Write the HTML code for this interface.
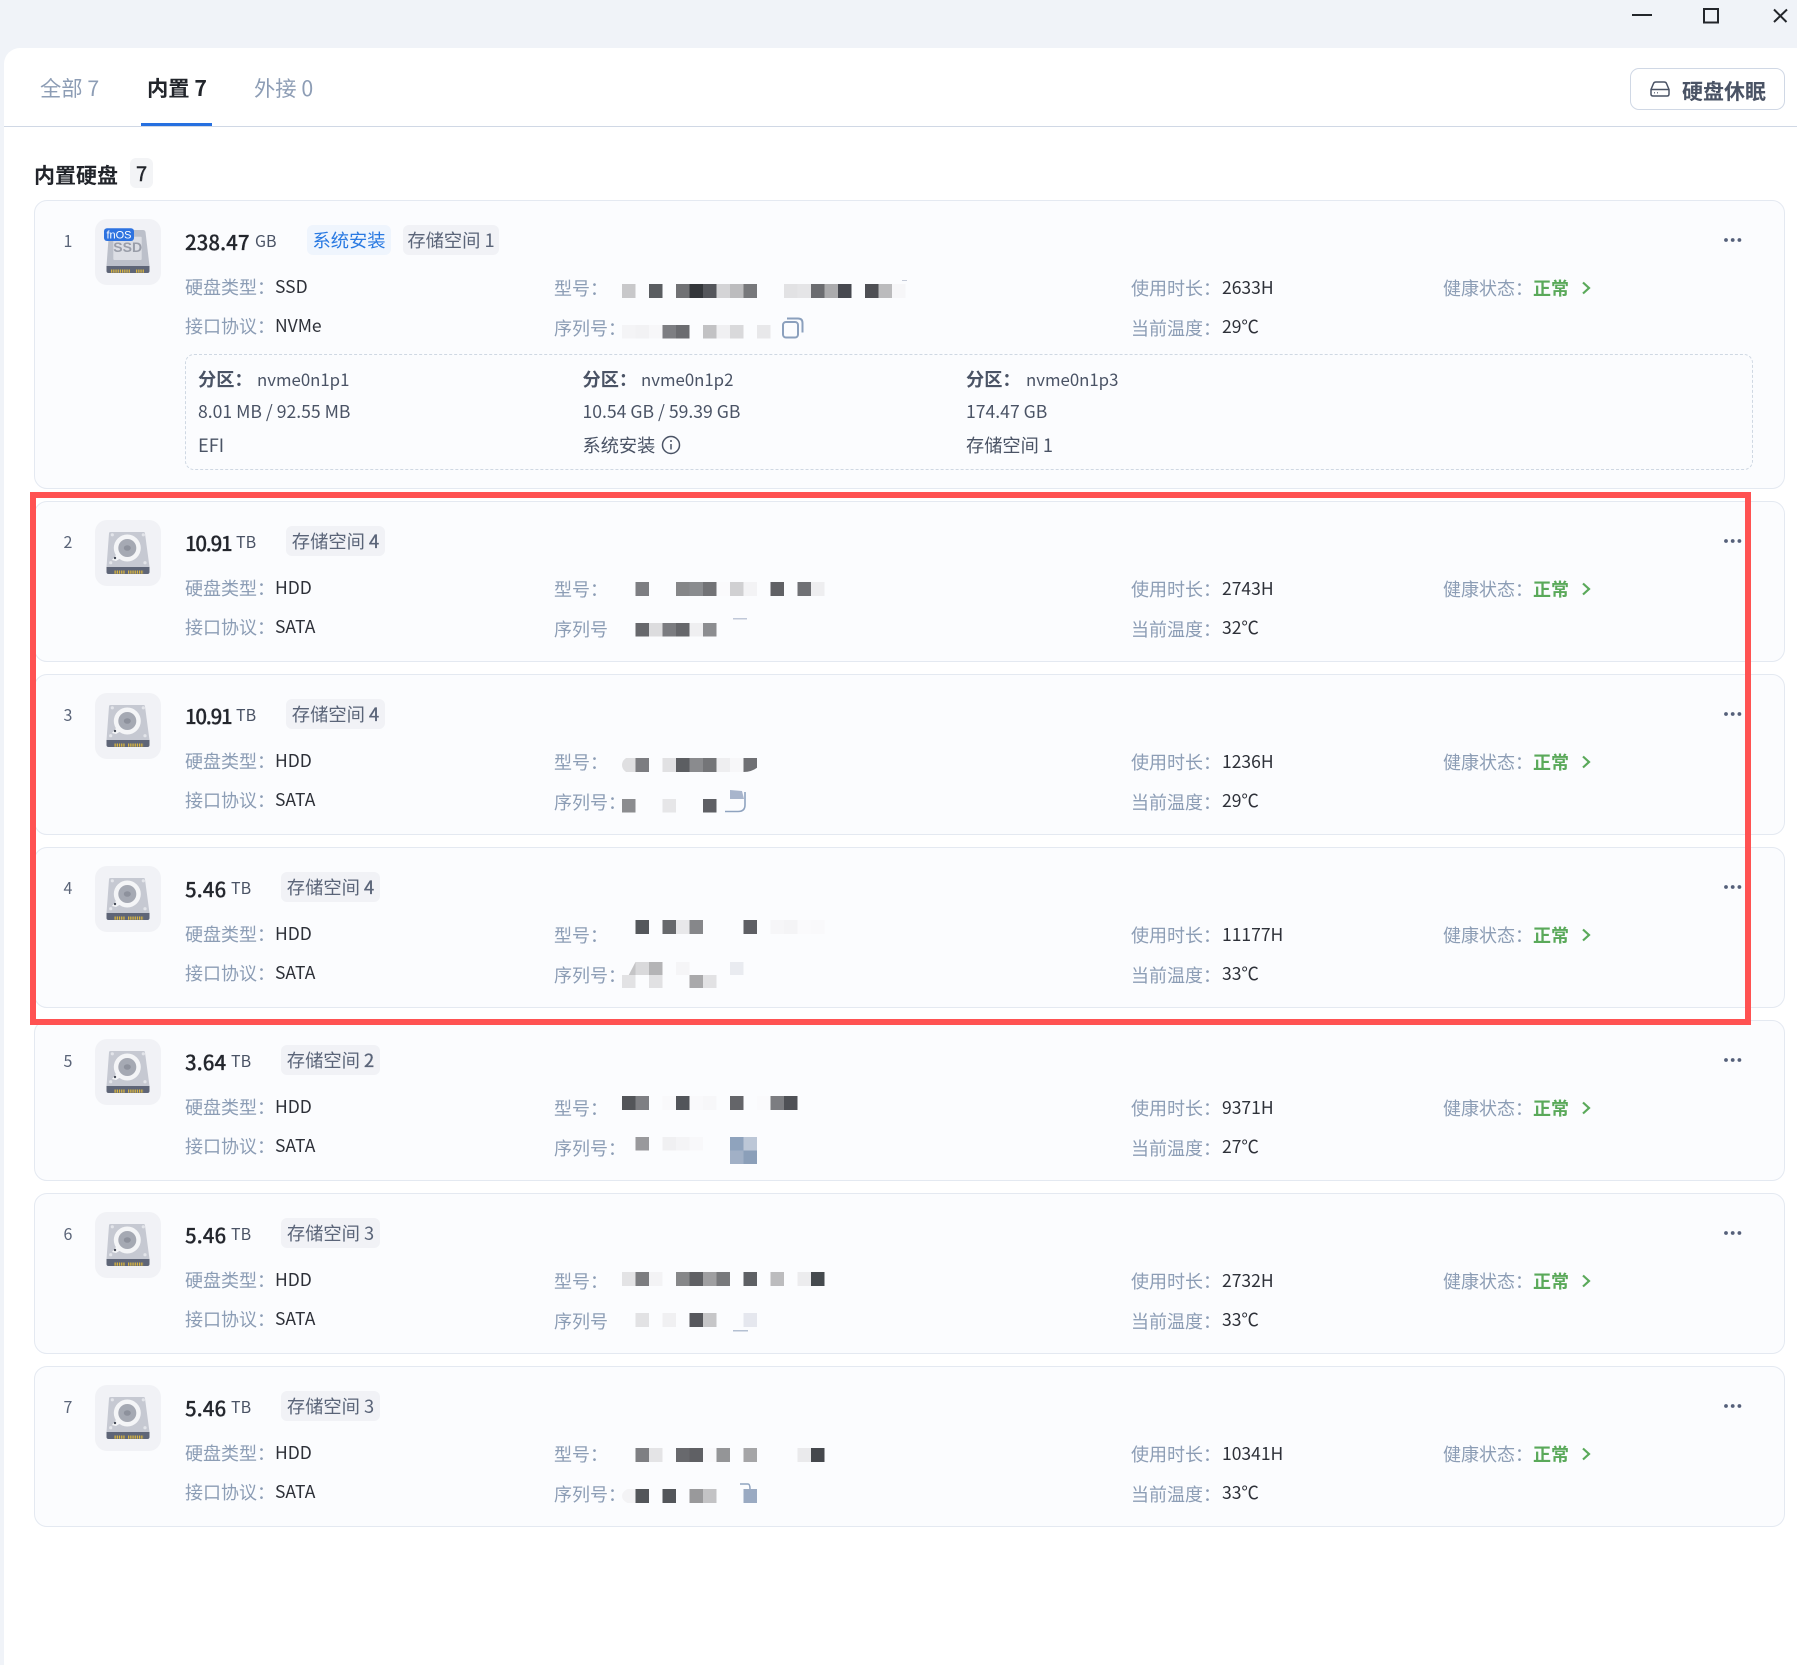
<!DOCTYPE html>
<html lang="zh"><head><meta charset="utf-8"><title>硬盘</title>
<style>
html,body{margin:0;padding:0;width:1797px;height:1665px;overflow:hidden;background:#f0f3f8}
body{position:relative;font-family:"Noto Sans CJK SC","Liberation Sans",sans-serif;font-size:18px}
div,span.a,svg.a{position:absolute}
.t{white-space:nowrap;line-height:26px;height:26px}
#panel{left:4px;top:48px;width:1793px;height:1617px;background:#fff;border-radius:16px 0 0 0}
.c{left:0;width:0;height:0}
.box{left:34px;top:0;width:1751px;height:161px;box-sizing:border-box;background:#fbfcfe;border:1px solid #e4e9f1;border-radius:13px}
.n{left:58px;width:20px;text-align:center;top:27px;color:#5a6478;font-size:16px}
.tile{left:95px;top:19px;width:66px;height:66px;background:#f1f2f6;border-radius:12px}
.sz{left:185px;top:28px;font-size:20.5px;color:#23262d;font-weight:500;-webkit-text-stroke:.2px #23262d}
.nar{letter-spacing:-1.3px}
.u{top:27px;font-size:16px;color:#4a5365}
.tag{top:25px;height:30px;line-height:31px;text-align:center;background:#f1f2f6;color:#5a6478;border-radius:6px;font-size:18.3px;white-space:nowrap}
.s{-webkit-text-stroke:.35px #5a6478}
.l{color:#8c9db5;font-size:18px}
.v{color:#2d3038;font-size:17.5px}
.l1{left:185px;top:74px}.l2{left:185px;top:113px}
.v1{left:275px;top:74px}.v2{left:275px;top:113px}
.m1{left:554px;top:74.500px}.m2{left:554px;top:114.500px}
.r1{left:1131px;top:75px}.r2{left:1131px;top:115px}
.w1{left:1222px;top:75px}.w2{left:1222px;top:114px}
.h{left:1443px;top:75px}
.ok{left:1533px;top:75px;color:#5aa95a;font-weight:700;font-size:18px}
.p{color:#4a5365;font-size:18.2px}
.pn{font-size:16.800px}
.pz{font-size:17.600px}
.b{font-weight:700}
</style></head><body>

<svg class="a" style="left:1625px;top:0" width="172" height="30" fill="none" stroke="#23262b" stroke-width="2">
<path d="M7 15H27"/><rect x="79" y="9" width="14" height="13.5"/><path d="M149 9.5L161.500 22M162 9.500L149 22"/></svg>

<div id="panel"></div>

<div class="t" style="left:40px;top:75px;font-size:21.3px;color:#8d9db5">全部 7</div>
<div class="t b" style="left:147px;top:75px;font-size:21.3px;color:#22252b">内置 7</div>
<div class="t" style="left:254px;top:75px;font-size:21.3px;color:#8d9db5">外接 0</div>
<div style="left:4px;top:126px;width:1793px;height:1px;background:#d0d8e5"></div>
<div style="left:141px;top:123px;width:71px;height:3px;background:#2670e0"></div>

<div style="left:1630px;top:68px;width:155px;height:42px;box-sizing:border-box;border:1px solid #d0d8e5;border-radius:9px;background:#fff"></div>
<svg class="a" style="left:1649px;top:80px" width="22" height="18" fill="none" stroke="#4a5365" stroke-width="1.5">
<path d="M2 9.500L4.500 3.500Q5 2 7 2H15Q17 2 17.500 3.500L20 9.500V14Q20 16 18 16H4Q2 16 2 14Z"/><path d="M2 9.500H20"/><path d="M5 12.800H6M8 12.800H9" stroke-width="1.200"/></svg>
<div class="t b" style="left:1682px;top:78px;font-size:21px;color:#4a5365">硬盘休眠</div>

<div class="t b" style="left:34px;top:162px;font-size:21px;color:#22252b">内置硬盘</div>
<div style="left:130px;top:158px;width:23px;height:30px;background:#f3f4f6;border-radius:6px;text-align:center;line-height:29px;font-size:20px;color:#22252b;-webkit-text-stroke:.4px #22252b">7</div>

<svg width="0" height="0" style="position:absolute">
<symbol id="hdd" viewBox="0 0 66 66">
<path d="M15.500 12H48.500Q50 12 50 13.500L54.500 47H11.500L14 13.500Q14 12 15.500 12Z" fill="#c6c9d2"/>
<path d="M11.500 47H54.500V52Q54.500 54 52.500 54H13.500Q11.500 54 11.500 52Z" fill="#5e6577"/>
<path d="M19.500 52.100H30M33 52.100H48.500" fill="none" stroke="#d8b542" stroke-width="3.200" stroke-dasharray="1.300 .9"/>
<circle cx="32.300" cy="28" r="13.500" fill="#f4f5f7"/>
<path d="M21 35L17 40L21 41L26 38Z" fill="#f4f5f7"/>
<circle cx="32.300" cy="28" r="9" fill="#a5a9b3"/>
<ellipse cx="32.300" cy="28" rx="3.500" ry="2.800" fill="#8d919c"/>
<circle cx="20" cy="38" r="1.200" fill="#444a56"/>
<circle cx="17.300" cy="14.800" r="1.600" fill="#e3e5ea"/><circle cx="48.300" cy="14.800" r="1.600" fill="#e3e5ea"/>
<circle cx="15.700" cy="42.700" r="1.600" fill="#e3e5ea"/><circle cx="50" cy="42.700" r="1.600" fill="#e3e5ea"/>
</symbol>
<symbol id="more" viewBox="0 0 20 6"><circle cx="3" cy="3" r="1.900" fill="#55607a"/><circle cx="9.700" cy="3" r="1.900" fill="#55607a"/><circle cx="16.400" cy="3" r="1.900" fill="#55607a"/></symbol>
<symbol id="chev" viewBox="0 0 10 14"><path d="M2 1.500L8 7L2 12.500" fill="none" stroke="#5aa95a" stroke-width="2.200"/></symbol>
</svg>

<!-- card 1 -->
<div class="c" style="top:200px">
<div class="box" style="height:289px"></div>
<div class="t n">1</div>
<div class="tile"><svg class="a" style="left:0;top:0" width="66" height="66" viewBox="0 0 66 66">
<path d="M16 11H48Q50 11 50.500 13L54.500 47H11.500L14 13Q14.500 11 16 11Z" fill="#bcc0ca"/>
<rect x="18.300" y="17.700" width="28.400" height="23.300" rx="1" fill="#dcdee4"/>
<text x="32.700" y="33" text-anchor="middle" font-family="Liberation Sans,sans-serif" font-weight="700" font-size="14" fill="#9a9ea9">SSD</text>
<path d="M11.500 47H54.500V52Q54.500 54 52.500 54H13.500Q11.500 54 11.500 52Z" fill="#5e6577"/>
<path d="M16 52.100H35M41 52.100H49" fill="none" stroke="#d8b542" stroke-width="3.200" stroke-dasharray="1.300 .9"/>
<rect x="9" y="9.300" width="30" height="12.700" rx="3" fill="#2e73e0"/>
<text x="24" y="19.500" text-anchor="middle" font-family="Liberation Sans,sans-serif" font-size="11" fill="#fff">fnOS</text>
</svg></div>
<div class="t sz">238.47</div><div class="t u" style="left:255px">GB</div>
<div class="tag" style="left:307px;width:84px;background:#eff5fd;color:#2a7ae2">系统安装</div>
<div class="tag" style="left:403px;width:96px">存储空间 1</div>
<svg class="a" style="left:1723px;top:37px" width="20" height="6"><use href="#more"/></svg>
<div class="t l l1">硬盘类型：</div><div class="t v v1">SSD</div>
<div class="t l l2">接口协议：</div><div class="t v v2">NVMe</div>
<div class="t l m1">型号：</div><div class="t l m2">序列号：</div>
<div class="t l r1">使用时长：</div><div class="t v w1">2633H</div>
<div class="t l r2">当前温度：</div><div class="t v w2">29℃</div>
<div class="t l h">健康状态：</div><div class="t ok">正常</div>
<svg class="a" style="left:1581px;top:81px" width="10" height="14"><use href="#chev"/></svg>
<svg class="a" style="left:780px;top:116px" width="25" height="24" fill="none" stroke="#8ba0bd" stroke-width="2"><rect x="3" y="6" width="15" height="15.500" rx="3"/><path d="M7 2.500H18Q22.500 2.500 22.500 7V16.500"/></svg>
<div style="left:185px;top:154px;width:1568px;height:116px;box-sizing:border-box;border:1px dashed #cfd8e3;border-radius:9px"></div>
<div class="t p b" style="left:198px;top:166px">分区：</div><div class="t p pn" style="left:257px;top:166px">nvme0n1p1</div>
<div class="t p pz" style="left:198px;top:199px">8.01 MB / 92.55 MB</div>
<div class="t p" style="left:198px;top:232px">EFI</div>
<div class="t p b" style="left:582.5px;top:166px">分区：</div><div class="t p pn" style="left:641px;top:166px">nvme0n1p2</div>
<div class="t p pz" style="left:582.500px;top:199px">10.54 GB / 59.39 GB</div>
<div class="t p" style="left:582.500px;top:232px">系统安装</div>
<svg class="a" style="left:661px;top:235px" width="20" height="20" fill="none" stroke="#4a5365" stroke-width="1.500"><circle cx="10" cy="10" r="8.500"/><path d="M10 9V14.500"/><circle cx="10" cy="6" r="1" fill="#4a5365" stroke="none"/></svg>
<div class="t p b" style="left:966px;top:166px">分区：</div><div class="t p pn" style="left:1026px;top:166px">nvme0n1p3</div>
<div class="t p pz" style="left:966px;top:199px">174.47 GB</div>
<div class="t p" style="left:966px;top:232px">存储空间 1</div>
</div>

<!-- card 2 -->
<div class="c" style="top:501px">
<div class="box"></div><div class="t n">2</div>
<div class="tile"><svg class="a" style="left:0;top:0" width="66" height="66"><use href="#hdd"/></svg></div>
<div class="t sz nar" style="top:27.500px">10.91</div><div class="t u" style="left:236px">TB</div>
<div class="tag" style="left:286px;width:99px">存储空间 <span class="s">4</span></div>
<svg class="a" style="left:1723px;top:37px" width="20" height="6"><use href="#more"/></svg>
<div class="t l l1">硬盘类型：</div><div class="t v v1">HDD</div>
<div class="t l l2">接口协议：</div><div class="t v v2">SATA</div>
<div class="t l m1">型号：</div><div class="t l m2">序列号</div>
<div class="t l r1">使用时长：</div><div class="t v w1">2743H</div>
<div class="t l r2">当前温度：</div><div class="t v w2">32℃</div>
<div class="t l h">健康状态：</div><div class="t ok">正常</div>
<svg class="a" style="left:1581px;top:81px" width="10" height="14"><use href="#chev"/></svg>
</div>

<!-- card 3 -->
<div class="c" style="top:674px">
<div class="box"></div><div class="t n">3</div>
<div class="tile"><svg class="a" style="left:0;top:0" width="66" height="66"><use href="#hdd"/></svg></div>
<div class="t sz nar" style="top:27.500px">10.91</div><div class="t u" style="left:236px">TB</div>
<div class="tag" style="left:286px;width:99px">存储空间 <span class="s">4</span></div>
<svg class="a" style="left:1723px;top:37px" width="20" height="6"><use href="#more"/></svg>
<div class="t l l1">硬盘类型：</div><div class="t v v1">HDD</div>
<div class="t l l2">接口协议：</div><div class="t v v2">SATA</div>
<div class="t l m1">型号：</div><div class="t l m2">序列号：</div>
<div class="t l r1">使用时长：</div><div class="t v w1">1236H</div>
<div class="t l r2">当前温度：</div><div class="t v w2">29℃</div>
<div class="t l h">健康状态：</div><div class="t ok">正常</div>
<svg class="a" style="left:1581px;top:81px" width="10" height="14"><use href="#chev"/></svg>
</div>

<!-- card 4 -->
<div class="c" style="top:847px">
<div class="box"></div><div class="t n">4</div>
<div class="tile"><svg class="a" style="left:0;top:0" width="66" height="66"><use href="#hdd"/></svg></div>
<div class="t sz" style="top:27.500px">5.46</div><div class="t u" style="left:231px">TB</div>
<div class="tag" style="left:281px;width:99px">存储空间 <span class="s">4</span></div>
<svg class="a" style="left:1723px;top:37px" width="20" height="6"><use href="#more"/></svg>
<div class="t l l1">硬盘类型：</div><div class="t v v1">HDD</div>
<div class="t l l2">接口协议：</div><div class="t v v2">SATA</div>
<div class="t l m1">型号：</div><div class="t l m2">序列号：</div>
<div class="t l r1">使用时长：</div><div class="t v w1">11177H</div>
<div class="t l r2">当前温度：</div><div class="t v w2">33℃</div>
<div class="t l h">健康状态：</div><div class="t ok">正常</div>
<svg class="a" style="left:1581px;top:81px" width="10" height="14"><use href="#chev"/></svg>
</div>

<!-- card 5 -->
<div class="c" style="top:1020px">
<div class="box"></div><div class="t n">5</div>
<div class="tile"><svg class="a" style="left:0;top:0" width="66" height="66"><use href="#hdd"/></svg></div>
<div class="t sz" style="top:27.500px">3.64</div><div class="t u" style="left:231px">TB</div>
<div class="tag" style="left:281px;width:99px">存储空间 <span class="s">2</span></div>
<svg class="a" style="left:1723px;top:37px" width="20" height="6"><use href="#more"/></svg>
<div class="t l l1">硬盘类型：</div><div class="t v v1">HDD</div>
<div class="t l l2">接口协议：</div><div class="t v v2">SATA</div>
<div class="t l m1">型号：</div><div class="t l m2">序列号：</div>
<div class="t l r1">使用时长：</div><div class="t v w1">9371H</div>
<div class="t l r2">当前温度：</div><div class="t v w2">27℃</div>
<div class="t l h">健康状态：</div><div class="t ok">正常</div>
<svg class="a" style="left:1581px;top:81px" width="10" height="14"><use href="#chev"/></svg>
</div>

<!-- card 6 -->
<div class="c" style="top:1193px">
<div class="box"></div><div class="t n">6</div>
<div class="tile"><svg class="a" style="left:0;top:0" width="66" height="66"><use href="#hdd"/></svg></div>
<div class="t sz" style="top:27.500px">5.46</div><div class="t u" style="left:231px">TB</div>
<div class="tag" style="left:281px;width:99px">存储空间 3</div>
<svg class="a" style="left:1723px;top:37px" width="20" height="6"><use href="#more"/></svg>
<div class="t l l1">硬盘类型：</div><div class="t v v1">HDD</div>
<div class="t l l2">接口协议：</div><div class="t v v2">SATA</div>
<div class="t l m1">型号：</div><div class="t l m2">序列号</div>
<div class="t l r1">使用时长：</div><div class="t v w1">2732H</div>
<div class="t l r2">当前温度：</div><div class="t v w2">33℃</div>
<div class="t l h">健康状态：</div><div class="t ok">正常</div>
<svg class="a" style="left:1581px;top:81px" width="10" height="14"><use href="#chev"/></svg>
</div>

<!-- card 7 -->
<div class="c" style="top:1366px">
<div class="box"></div><div class="t n">7</div>
<div class="tile"><svg class="a" style="left:0;top:0" width="66" height="66"><use href="#hdd"/></svg></div>
<div class="t sz" style="top:27.500px">5.46</div><div class="t u" style="left:231px">TB</div>
<div class="tag" style="left:281px;width:99px">存储空间 3</div>
<svg class="a" style="left:1723px;top:37px" width="20" height="6"><use href="#more"/></svg>
<div class="t l l1">硬盘类型：</div><div class="t v v1">HDD</div>
<div class="t l l2">接口协议：</div><div class="t v v2">SATA</div>
<div class="t l m1">型号：</div><div class="t l m2">序列号：</div>
<div class="t l r1">使用时长：</div><div class="t v w1">10341H</div>
<div class="t l r2">当前温度：</div><div class="t v w2">33℃</div>
<div class="t l h">健康状态：</div><div class="t ok">正常</div>
<svg class="a" style="left:1581px;top:81px" width="10" height="14"><use href="#chev"/></svg>
</div>

<!-- mosaic blocks -->
<svg class="a" style="left:0;top:0" width="1797" height="1665">
<g transform="translate(622,284) scale(13.5,14)">
<rect x="0" width="1" height="1" fill="#c8c8ca"/><rect x="2" width="1" height="1" fill="#5a5d61"/><rect x="4" width="1" height="1" fill="#707174"/><rect x="5" width="1" height="1" fill="#33363a"/><rect x="6" width="1" height="1" fill="#54565b"/><rect x="7" width="1" height="1" fill="#d4d4d6"/><rect x="8" width="1" height="1" fill="#bcbcbe"/><rect x="9" width="1" height="1" fill="#77787b"/><rect x="12" width="1" height="1" fill="#e2e2e4"/><rect x="13" width="1" height="1" fill="#e5e5e7"/><rect x="14" width="1" height="1" fill="#6b6c70"/><rect x="15" width="1" height="1" fill="#ababad"/><rect x="16" width="1" height="1" fill="#46484f"/><rect x="18" width="1" height="1" fill="#4e4f54"/><rect x="19" width="1" height="1" fill="#bbbbbd"/><rect x="20" width="1" height="1" fill="#f6f6f8"/></g>
<rect x="902" y="280" width="5" height="1" fill="#c5cbd8"/>
<g transform="translate(622,325) scale(13.5,13.5)">
<rect x="0" width="1" height="1" fill="#f4f4f6"/><rect x="1" width="1" height="1" fill="#f2f2f4"/><rect x="2" width="1" height="1" fill="#f7f7f9"/><rect x="3" width="1" height="1" fill="#7d7e82"/><rect x="4" width="1" height="1" fill="#6b6c70"/><rect x="6" width="1" height="1" fill="#c2c2c4"/><rect x="7" width="1" height="1" fill="#f0f0f2"/><rect x="8" width="1" height="1" fill="#d9d9db"/><rect x="10" width="1" height="1" fill="#e8e8ea"/></g>

<g transform="translate(622,582) scale(13.5,14)">
<rect x="1" width="1" height="1" fill="#7d7e82"/><rect x="4" width="1" height="1" fill="#858688"/><rect x="5" width="1" height="1" fill="#8a8c8f"/><rect x="6" width="1" height="1" fill="#727376"/><rect x="7" width="1" height="1" fill="#fafafc"/><rect x="8" width="1" height="1" fill="#d0d0d2"/><rect x="9" width="1" height="1" fill="#f3f3f5"/><rect x="11" width="1" height="1" fill="#606165"/><rect x="13" width="1" height="1" fill="#707175"/><rect x="14" width="1" height="1" fill="#eeeef0"/></g>
<g transform="translate(622,623) scale(13.5,13.500)">
<rect x="1" width="1" height="1" fill="#67686c"/><rect x="2" width="1" height="1" fill="#dcdcde"/><rect x="3" width="1" height="1" fill="#7b7c80"/><rect x="4" width="1" height="1" fill="#66676b"/><rect x="5" width="1" height="1" fill="#efeff1"/><rect x="6" width="1" height="1" fill="#8c8d90"/></g>
<rect x="733" y="618" width="14" height="1.500" fill="#c0c8d8"/>

<g transform="translate(622,758) scale(13.5,14)">
<path d="M.3 0H1V1H.3Q0 .8 0 .5Q0 .2 .3 0Z" fill="#dfdfe1"/><rect x="1" width="1" height="1" fill="#7c7d81"/><rect x="3" width="1" height="1" fill="#e1e1e3"/><rect x="4" width="1" height="1" fill="#5c5e62"/><rect x="5" width="1" height="1" fill="#8a8b8e"/><rect x="6" width="1" height="1" fill="#747578"/><rect x="7" width="1" height="1" fill="#eeeef0"/><rect x="8" width="1" height="1" fill="#f7f7f9"/><path d="M9 0H10V.7Q9.600 1 9 1Z" fill="#6f7074"/></g>
<g transform="translate(622,799) scale(13.5,13.500)">
<rect x="0" width="1" height="1" fill="#8b8c8f"/><rect x="3" width="1" height="1" fill="#e6e6e8"/><rect x="6" width="1" height="1" fill="#5e5f64"/></g>
<path d="M730 790L742 791L744 799L730 799Z" fill="#a8b5cc"/>
<path d="M725 811.500H738Q745 811.500 745 805V792" fill="none" stroke="#8fa3bf" stroke-width="1.600"/>

<g transform="translate(622,920) scale(13.5,14)">
<rect x="1" width="1" height="1" fill="#54575b"/><rect x="3" width="1" height="1" fill="#67696c"/><rect x="4" width="1" height="1" fill="#e8e8ea"/><rect x="5" width="1" height="1" fill="#86878a"/><rect x="9" width="1" height="1" fill="#5e5f64"/><rect x="11" width="1" height="1" fill="#f6f6f8"/><rect x="12" width="1" height="1" fill="#f4f4f6"/><rect x="13" width="1" height="1" fill="#fafafc"/><rect x="14" width="1" height="1" fill="#f9f9fb"/></g>
<g transform="translate(622,962) scale(13.5,13)">
<path d="M.5 1L1 0H1V1Z" fill="#c4c4c6"/><rect x="1" width="1" height="1" fill="#d9d9db"/><rect x="2" width="1" height="1" fill="#b4b4b6"/><rect x="4" width="1" height="1" fill="#f5f5f7"/><rect x="8" width="1" height="1" fill="#e9ebf0"/>
<rect x="0" y="1" width="1" height="1" fill="#e2e2e4"/><rect x="2" y="1" width="1" height="1" fill="#e1e1e3"/><rect x="5" y="1" width="1" height="1" fill="#a9a9ab"/><rect x="6" y="1" width="1" height="1" fill="#e2e2e4"/></g>

<g transform="translate(622,1096) scale(13.5,14)">
<rect x="0" width="1" height="1" fill="#535559"/><rect x="1" width="1" height="1" fill="#7e7f83"/><rect x="3" width="1" height="1" fill="#f9f9fb"/><rect x="4" width="1" height="1" fill="#52555a"/><rect x="5" width="1" height="1" fill="#f9f9fb"/><rect x="6" width="1" height="1" fill="#f7f7f9"/><rect x="8" width="1" height="1" fill="#646569"/><rect x="10" width="1" height="1" fill="#fafafc"/><rect x="11" width="1" height="1" fill="#7c7d81"/><rect x="12" width="1" height="1" fill="#4f5156"/></g>
<g transform="translate(622,1137) scale(13.5,13.500)">
<rect x="1" width="1" height="1" fill="#99999c"/><rect x="3" width="1" height="1" fill="#f0f0f2"/><rect x="4" width="1" height="1" fill="#f4f4f6"/><rect x="5" width="1" height="1" fill="#f8f8fa"/><rect x="8" width="1" height="1" fill="#8fa3bd"/><rect x="9" width="1" height="1" fill="#bcc7d7"/><rect x="8" y="1" width="1" height="1" fill="#a1b0c6"/><rect x="9" y="1" width="1" height="1" fill="#8b9fb9"/></g>

<g transform="translate(622,1272) scale(13.5,14)">
<rect x="0" width="1" height="1" fill="#e3e3e5"/><rect x="1" width="1" height="1" fill="#7c7d80"/><rect x="2" width="1" height="1" fill="#f3f3f5"/><rect x="4" width="1" height="1" fill="#868789"/><rect x="5" width="1" height="1" fill="#5f6064"/><rect x="6" width="1" height="1" fill="#9f9fa1"/><rect x="7" width="1" height="1" fill="#78797c"/><rect x="9" width="1" height="1" fill="#5e6064"/><rect x="11" width="1" height="1" fill="#bcbcbe"/><rect x="13" width="1" height="1" fill="#ececee"/><rect x="14" width="1" height="1" fill="#454a4e"/></g>
<g transform="translate(622,1313) scale(13.5,14)">
<rect x="1" width="1" height="1" fill="#e2e2e4"/><rect x="3" width="1" height="1" fill="#f0f0f2"/><rect x="5" width="1" height="1" fill="#57585d"/><rect x="6" width="1" height="1" fill="#c6c6c8"/><rect x="9" width="1" height="1" fill="#e5e7ee"/></g>
<rect x="733" y="1330" width="15" height="1.500" fill="#b4c0d2"/>

<g transform="translate(622,1448) scale(13.5,14)">
<rect x="1" width="1" height="1" fill="#7e7f83"/><rect x="2" width="1" height="1" fill="#e4e4e6"/><rect x="4" width="1" height="1" fill="#68696d"/><rect x="5" width="1" height="1" fill="#5f6064"/><rect x="6" width="1" height="1" fill="#f9f9fb"/><rect x="7" width="1" height="1" fill="#949597"/><rect x="9" width="1" height="1" fill="#a5a5a7"/><rect x="13" width="1" height="1" fill="#eaeaec"/><rect x="14" width="1" height="1" fill="#45484d"/></g>
<g transform="translate(622,1489) scale(13.5,14)">
<path d="M.4 0H1V1H.4Q0 .8 0 .5Q0 .2 .4 0Z" fill="#f3f3f5"/><rect x="1" width="1" height="1" fill="#53565a"/><rect x="3" width="1" height="1" fill="#53565a"/><rect x="5" width="1" height="1" fill="#99999b"/><rect x="6" width="1" height="1" fill="#c3c3c5"/><rect x="9" width="1" height="1" fill="#9aaac2"/></g>
<path d="M740 1484H748Q750 1484 750 1489" fill="none" stroke="#8fa3bf" stroke-width="1.500"/>
</svg>

<div style="left:30px;top:492px;width:1721px;height:533px;box-sizing:border-box;border:6px solid #ff5252"></div>
</body></html>
